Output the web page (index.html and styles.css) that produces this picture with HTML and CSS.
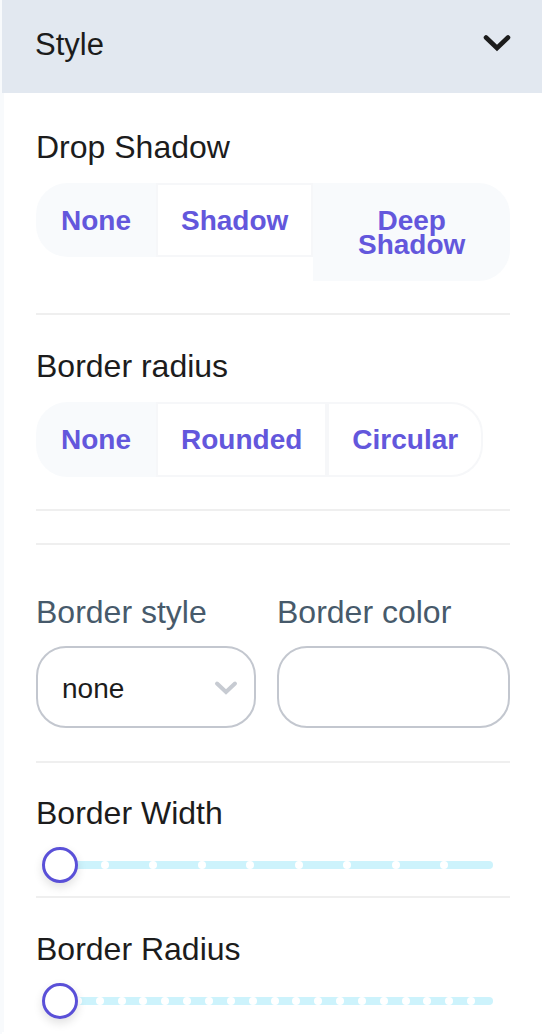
FILE: index.html
```html
<!DOCTYPE html>
<html lang="en">
<head>
<meta charset="utf-8">
<title>Style</title>
<link rel="stylesheet" href="styles.css">
</head>
<body>
<div class="panel">
  <div class="panel-header">
    <span class="panel-title">Style</span>
    <svg class="chev" width="28" height="18" viewBox="0 0 28 18"><path d="M3 3.5 L14 14 L25 3.5" fill="none" stroke="#1c1c1c" stroke-width="4.6" stroke-linecap="round" stroke-linejoin="miter"/></svg>
  </div>
  <div class="panel-body">
    <section class="sec sec-shadow">
      <div class="label">Drop Shadow</div>
      <div class="seg">
        <button class="opt opt-muted">None</button>
        <button class="opt">Shadow</button>
        <button class="opt opt-muted opt-grow">Deep Shadow</button>
      </div>
    </section>
    <section class="sec sec-radius">
      <div class="label">Border radius</div>
      <div class="seg">
        <button class="opt opt-muted">None</button>
        <button class="opt">Rounded</button>
        <button class="opt">Circular</button>
      </div>
    </section>
    <section class="sec sec-empty"></section>
    <section class="sec sec-border">
      <div class="field-row">
        <div class="field">
          <div class="label label-muted">Border style</div>
          <div class="select">
            <span>none</span>
            <svg width="24" height="16" viewBox="0 0 24 16"><path d="M3 3.5 L12 12 L21 3.5" fill="none" stroke="#c7cbd2" stroke-width="4" stroke-linecap="round"/></svg>
          </div>
        </div>
        <div class="field">
          <div class="label label-muted">Border color</div>
          <div class="color-input"></div>
        </div>
      </div>
    </section>
    <section class="sec sec-width">
      <div class="label">Border Width</div>
      <div class="slider">
        <div class="track">
          <span class="tick" style="left:11.111%"></span>
          <span class="tick" style="left:22.222%"></span>
          <span class="tick" style="left:33.333%"></span>
          <span class="tick" style="left:44.444%"></span>
          <span class="tick" style="left:55.556%"></span>
          <span class="tick" style="left:66.667%"></span>
          <span class="tick" style="left:77.778%"></span>
          <span class="tick" style="left:88.889%"></span>
        </div>
        <div class="thumb"></div>
      </div>
    </section>
    <section class="sec sec-bradius">
      <div class="label">Border Radius</div>
      <div class="slider">
        <div class="track">
          <span class="tick" style="left:5%"></span>
          <span class="tick" style="left:10%"></span>
          <span class="tick" style="left:15%"></span>
          <span class="tick" style="left:20%"></span>
          <span class="tick" style="left:25%"></span>
          <span class="tick" style="left:30%"></span>
          <span class="tick" style="left:35%"></span>
          <span class="tick" style="left:40%"></span>
          <span class="tick" style="left:45%"></span>
          <span class="tick" style="left:50%"></span>
          <span class="tick" style="left:55%"></span>
          <span class="tick" style="left:60%"></span>
          <span class="tick" style="left:65%"></span>
          <span class="tick" style="left:70%"></span>
          <span class="tick" style="left:75%"></span>
          <span class="tick" style="left:80%"></span>
          <span class="tick" style="left:85%"></span>
          <span class="tick" style="left:90%"></span>
          <span class="tick" style="left:95%"></span>
        </div>
        <div class="thumb"></div>
      </div>
    </section>
  </div>
</div>
</body>
</html>
```
FILE: styles.css
```css
* { box-sizing: border-box; }
html, body { margin: 0; padding: 0; }
body {
  background: #f8fafc;
  font-family: "Liberation Sans", Arial, Helvetica, sans-serif;
  color: #1c1c1c;
  width: 542px;
  height: 1034px;
  overflow: hidden;
}
.panel {
  margin-left: 2px;
  background: #ffffff;
  min-height: 1034px;
}
.panel-header {
  height: 93px;
  background: #e2e8f0;
  display: flex;
  align-items: center;
  justify-content: space-between;
  padding: 0 31px 4px 33px;
}
.panel-title {
  font-size: 31px;
  line-height: 36px;
  color: #1c1c1c;
}
.chev { display: block; margin-bottom: 3px; }
.panel-body {
  border-left: 2px solid #f8fafc;
  padding: 0 32px;
}
.sec {
  border-bottom: 2px solid #efefef;
}
.sec-shadow { padding: 36px 0 32px; }
.sec-radius { padding: 33px 0 32px; }
.sec-empty { height: 34px; }
.sec-border { padding: 49px 0 33px; }
.sec-width { padding: 32px 0 13px; }
.sec-bradius { padding: 33px 0 13px; border-bottom: none; }
.label {
  font-size: 32px;
  line-height: 36px;
  color: #1c1c1c;
  white-space: nowrap;
}
.label-muted { color: #475a6b; }
.seg {
  margin-top: 18px;
  display: flex;
  align-items: flex-start;
}
.opt {
  font-family: inherit;
  font-weight: 700;
  font-size: 28px;
  line-height: 24px;
  color: #6357dc;
  background: #ffffff;
  border: 2px solid #f6f7f9;
  padding: 24px 23px 22px;
  margin: 0;
  text-align: center;
  flex: none;
}
.opt-muted {
  background: #f8fafc;
  border-color: #f8fafc;
}
.opt:first-child { border-radius: 32px 0 0 32px; }
.opt:last-child { border-radius: 0 32px 32px 0; }
.opt-grow { flex: 1 1 0; min-width: 0; }
.sec-radius .opt { padding-bottom: 23px; }
.field-row {
  display: grid;
  grid-template-columns: 220px 1fr;
  column-gap: 21px;
}
.select, .color-input {
  margin-top: 16px;
  height: 82px;
  border: 2px solid #c3c7cf;
  border-radius: 30px;
  background: #fff;
}
.select {
  display: flex;
  align-items: center;
  justify-content: space-between;
  padding: 3px 16px 0 24px;
  font-size: 28px;
  color: #1c1c1c;
}
.select svg { display: block; margin-top: -1px; }
.slider {
  position: relative;
  margin-top: 16px;
  height: 36px;
  display: flex;
  align-items: center;
  padding: 0 17px 0 20px;
}
.track {
  position: relative;
  flex: 1;
  height: 8px;
  border-radius: 4px;
  background: #cdf3fc;
}
.tick {
  position: absolute;
  top: 50%;
  width: 8px;
  height: 8px;
  border-radius: 50%;
  background: #ffffff;
  transform: translate(-50%, -50%);
}
.thumb {
  position: absolute;
  left: 6px;
  top: 0;
  width: 36px;
  height: 36px;
  border-radius: 50%;
  border: 3px solid #5a50d8;
  background: #ffffff;
  box-shadow: 0 4px 10px rgba(0, 0, 0, 0.12);
}
```
